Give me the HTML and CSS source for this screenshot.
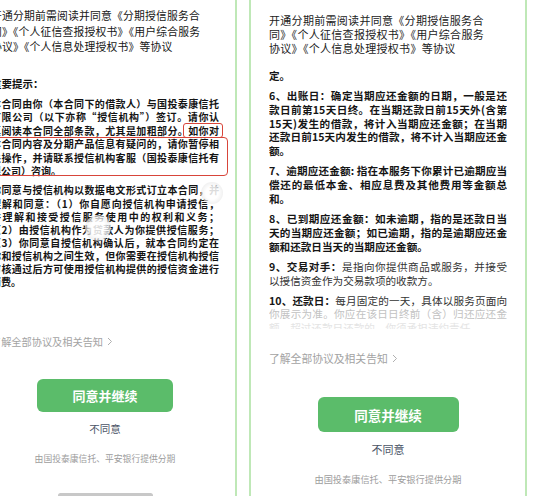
FILE: index.html
```html
<!DOCTYPE html>
<html lang="zh-CN">
<head>
<meta charset="utf-8">
<title>分期授信协议</title>
<link rel="stylesheet" href="styles.css">
</head>
<body>
<div class="panel panel-left">
  <div class="phone phone-left">
    <div class="l-intro">
      <div>开通分期前需阅读并同意《分期授信服务合</div>
      <div>同》《个人征信查报授权书》《用户综合服务</div>
      <div>协议》《个人信息处理授权书》等协议</div>
    </div>
    <div class="l-title">重要提示：</div>
    <div class="l-para">
      <div class="j">本合同由你（本合同下的借款人）与国投泰康信托</div>
      <div class="j">有限公司（以下亦称“授信机构”）签订。请你认</div>
      <div class="j">真阅读本合同全部条款，尤其是加粗部分。如你对</div>
      <div class="j">本合同内容及分期产品信息有疑问的，请你暂停相</div>
      <div class="j">关操作，并请联系授信机构客服（国投泰康信托有</div>
      <div>限公司）咨询。</div>
    </div>
    <div class="l-para l-para2">
      <div class="j">你同意与授信机构以数据电文形式订立本合同，并</div>
      <div class="j">理解和同意：（1）你自愿向授信机构申请授信，</div>
      <div class="j">并理解和接受授信服务使用中的权利和义务；</div>
      <div class="j">（2）由授信机构作为贷款人为你提供授信服务；</div>
      <div class="j">（3）你同意自授信机构确认后，就本合同约定在</div>
      <div class="j">你和授信机构之间生效，但你需要在授信机构授信</div>
      <div class="j">审核通过后方可使用授信机构提供的授信资金进行</div>
      <div>消费。</div>
    </div>
    <div class="link l-link">了解全部协议及相关告知<svg class="chev" width="6" height="9" viewBox="0 0 6 9"><path d="M1 1 L4.5 4.5 L1 8" fill="none" stroke="#b0b0b0" stroke-width="1"/></svg></div>
    <div class="btn l-btn">同意并继续</div>
    <div class="no l-no">不同意</div>
    <div class="foot l-foot">由国投泰康信托、平安银行提供分期</div>
    <div class="home"></div>
  </div>
  <div class="mark mark-a"></div>
  <div class="mark mark-b"></div>
  <div class="blob blob-a"></div>
  <div class="blob blob-b"></div>
</div>

<div class="panel panel-right">
  <div class="phone phone-right">
    <div class="r-intro">
      <div>开通分期前需阅读并同意《分期授信服务合</div>
      <div>同》《个人征信查报授权书》《用户综合服务</div>
      <div>协议》《个人信息处理授权书》等协议</div>
    </div>
    <div class="scroll">
      <div class="r-p"><div>定。</div></div>
      <div class="r-p">
        <div class="j">6、出账日：确定当期应还金额的日期，一般是还</div>
        <div class="j">款日前第15天日终。在当期还款日前15天外(含第</div>
        <div class="j">15天)发生的借款，将计入当期应还金额；在当期</div>
        <div class="j">还款日前15天内发生的借款，将不计入当期应还金</div>
        <div>额。</div>
      </div>
      <div class="r-p">
        <div class="j">7、逾期应还金额: 指在本服务下你累计已逾期应当</div>
        <div class="j">偿还的最低本金、相应息费及其他费用等金额总</div>
        <div>和。</div>
      </div>
      <div class="r-p">
        <div class="j">8、已到期应还金额：如未逾期，指的是还款日当</div>
        <div class="j">天的当期应还金额；如已逾期，指的是逾期应还金</div>
        <div>额和还款日当天的当期应还金额。</div>
      </div>
      <div class="r-p">
        <div class="j">9、交易对手：<span class="reg">是指向你提供商品或服务，并接受</span></div>
        <div class="reg">以授信资金作为交易款项的收款方。</div>
      </div>
      <div class="r-p">
        <div class="j">10、还款日：<span class="reg">每月固定的一天，具体以服务页面向</span></div>
        <div class="j reg fade1">你展示为准。你应在该日日终前（含）归还应还金</div>
        <div class="reg fade2">额，超过还款日还款的，你须承担违约责任。</div>
      </div>
    </div>
    <div class="link r-link">了解全部协议及相关告知<svg class="chev" width="6" height="9" viewBox="0 0 6 9"><path d="M1 1 L4.5 4.5 L1 8" fill="none" stroke="#b0b0b0" stroke-width="1"/></svg></div>
    <div class="btn r-btn">同意并继续</div>
    <div class="no r-no">不同意</div>
    <div class="foot r-foot">由国投泰康信托、平安银行提供分期</div>
  </div>
</div>
</body>
</html>
```
FILE: styles.css
```css
* {
  box-sizing: border-box;
  margin: 0;
  padding: 0;
}

html,
body {
  width: 533px;
  height: 496px;
  overflow: hidden;
  background: #ffffff;
}

body {
  display: flex;
  font-family: "Noto Sans CJK SC", "Noto Sans", sans-serif;
  color: #1a1a1a;
}

.panel {
  flex: none;
  height: 496px;
  overflow: hidden;
  position: relative;
  background: #ffffff;
}

.panel-left {
  width: 237px;
  border-right: 2px solid #bfe8b7;
}

.panel-right {
  width: 278px;
  margin-left: 12px;
  border-left: 2px solid #bfe8b7;
  border-right: 2px solid #bfe8b7;
}

.phone {
  display: flex;
  flex-direction: column;
}

.phone-left {
  width: 262px;
  margin-left: -27px;
  padding: 8px 16px 0 18px;
}

.phone-right {
  width: 274px;
  padding: 13px 18px 0 18px;
}

.j {
  text-align: justify;
  text-align-last: justify;
}

/* ---------- left phone ---------- */
.l-intro {
  font-size: 10.8px;
  letter-spacing: 0.2px;
  line-height: 15.5px;
  color: #161616;
  white-space: nowrap;
}

.l-title {
  margin-top: 22.5px;
  font-size: 10.5px;
  line-height: 14px;
  font-weight: 700;
  color: #111;
}

.l-para {
  margin-top: 6px;
  font-size: 10px;
  line-height: 13.4px;
  font-weight: 700;
  color: #141414;
}

.l-para2 {
  line-height: 13.1px;
}

.link {
  display: flex;
  align-items: center;
  color: #a3a3a3;
  line-height: 14px;
}

.chev {
  margin-left: 4px;
  flex: none;
}

.l-link {
  margin-top: 46.8px;
  font-size: 10.2px;
}

.btn {
  align-self: center;
  display: flex;
  align-items: center;
  justify-content: center;
  background: #5bbc6a;
  color: #ffffff;
  font-weight: 700;
  border-radius: 6px;
}

.l-btn {
  margin-top: 30px;
  width: 136px;
  height: 33px;
  font-size: 13px;
}

.no {
  text-align: center;
  color: #4b5466;
  line-height: 14px;
}

.l-no {
  margin-top: 10px;
  font-size: 10.5px;
}

.foot {
  text-align: center;
  color: #9d9d9d;
  line-height: 12px;
}

.l-foot {
  margin-top: 17px;
  font-size: 8.8px;
}

.home {
  align-self: center;
  margin-top: 28px;
  width: 95px;
  height: 5px;
  border-radius: 3px;
  background: #c8c8c8;
}

/* red annotation outlines */
.mark {
  position: absolute;
  border: 1.5px solid #d8453a;
  border-radius: 3px;
}

.mark-a {
  left: 183px;
  top: 123px;
  width: 40px;
  height: 15px;
}

.mark-b {
  left: -4px;
  top: 137px;
  width: 232px;
  height: 39px;
  border-radius: 4px;
}

/* faint translucent overlay blobs */
.blob {
  position: absolute;
  border-radius: 50%;
  background: radial-gradient(circle, rgba(255, 255, 255, 0.85) 40%, rgba(225, 225, 225, 0.55) 75%, rgba(255, 255, 255, 0) 100%);
}

.blob-a {
  left: 85px;
  top: 215px;
  width: 26px;
  height: 26px;
}

.blob-b {
  left: 201px;
  top: 182px;
  width: 22px;
  height: 22px;
}

/* ---------- right phone ---------- */
.r-intro {
  font-size: 11px;
  letter-spacing: 0.3px;
  line-height: 14px;
  color: #222;
  white-space: nowrap;
}

.scroll {
  height: 274px;
  overflow: hidden;
  padding-top: 14px;
}

.r-p {
  font-size: 10.6px;
  line-height: 13.8px;
  font-weight: 700;
  color: #151515;
}

.r-p + .r-p {
  margin-top: 6.3px;
}

.reg {
  font-weight: 400;
  color: #333;
}

.fade1 {
  color: #c2c2c2;
}

.fade2 {
  color: #e4e4e4;
}

.r-link {
  margin-top: 22px;
  font-size: 10.8px;
}

.r-btn {
  margin-top: 32px;
  width: 141px;
  height: 35px;
  font-size: 13.5px;
}

.r-no {
  margin-top: 10px;
  font-size: 11px;
}

.r-foot {
  margin-top: 17px;
  font-size: 9.2px;
}
```
